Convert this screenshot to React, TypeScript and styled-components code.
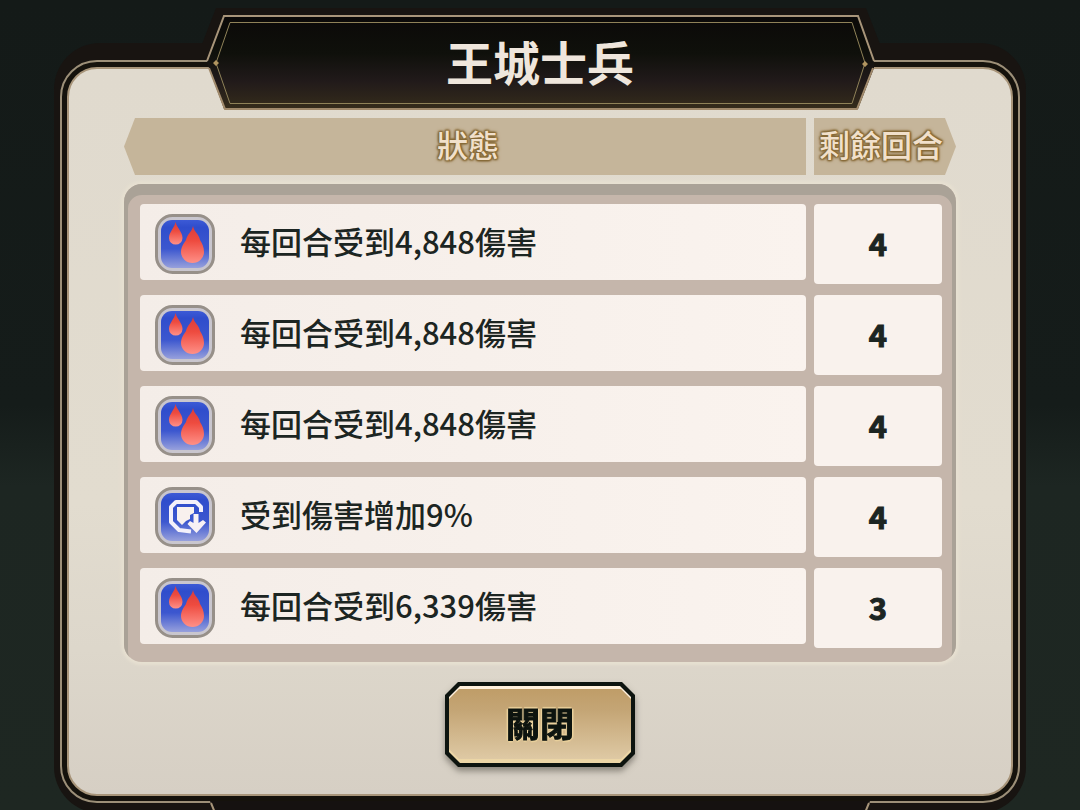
import React from 'react';
import styled, { createGlobalStyle } from 'styled-components';

const GlobalStyle = createGlobalStyle`
  * { box-sizing: border-box; }
  html, body { margin: 0; background: #171d1b; }
  body { font-family: "Noto Sans CJK TC", "Noto Sans", sans-serif; }
`;

const Page = styled.div`
  height: 100vh;
  overflow: hidden;
  padding: 43px 5% 0;
  background: linear-gradient(180deg, #141a18 0%, #151c1a 50%, #1d2622 60%, #1e2722 100%);
`;

const Dialog = styled.main`
  position: relative;
  padding: 17px 6px 10px;
  border-radius: 46px;
  background: #181411;
`;

const OuterLine = styled.div`
  border: 2px solid #9c8f78;
  border-radius: 37px;
  padding: 5px;
  background: #15120c;
`;

const Body = styled.div`
  border: 2px solid #a8957a;
  border-radius: 30px;
  padding: 49px 55px 27px;
  display: flex;
  flex-direction: column;
  align-items: center;
  gap: 20px;
  background: linear-gradient(180deg, #e0dace 0%, #e2dccf 60%, #ddd7cb 80%, #d6cfc4 100%);
`;

const Banner = styled.header`
  position: absolute;
  top: -35px;
  left: 50%;
  width: 684px;
  height: 104px;
  transform: translateX(-50%);
  display: flex;
  align-items: center;
  justify-content: center;
  padding-top: 2px;
`;

const BannerArt = styled.svg`
  position: absolute;
  inset: 0;
`;

const Title = styled.h1`
  position: relative;
  margin: 0;
  font-size: 47px;
  line-height: 64px;
  font-weight: 700;
  color: #efe6dc;
`;

const BottomTab = styled.svg`
  position: absolute;
  left: 50%;
  bottom: -32px;
  transform: translateX(-50%);
`;

const StatusTable = styled.table`
  display: block;
  width: 100%;
`;

const HeadGroup = styled.thead`
  display: block;
  margin-bottom: 9px;
`;

const HeadRow = styled.tr`
  display: grid;
  grid-template-columns: 1fr 142px;
  gap: 8px;
`;

const HeadCell = styled.th<{ $end?: boolean }>`
  height: 57px;
  padding: ${p => (p.$end ? '0 8px 6px 0' : '0 0 6px 6px')};
  display: flex;
  align-items: center;
  justify-content: center;
  white-space: nowrap;
  font-size: 31px;
  line-height: 44px;
  font-weight: 500;
  color: #f1e0cb;
  background: #c5b59a;
  text-shadow: 0 0 2px #876a38, 0 0 2px #876a38, 1px 1px 2px #876a38, -1px -1px 2px #876a38,
    1px -1px 2px #876a38, -1px 1px 2px #876a38, 0 0 4px #8f7342;
  clip-path: ${p =>
    p.$end
      ? 'polygon(0 0, calc(100% - 11px) 0, 100% 50%, calc(100% - 11px) 100%, 0 100%)'
      : 'polygon(11px 0, 100% 0, 100% 100%, 11px 100%, 0 50%)'};
`;

const Panel = styled.tbody`
  display: flex;
  flex-direction: column;
  gap: 11px;
  padding: 20px 14px 14px 16px;
  border-radius: 18px;
  background: #c5b6ab;
  box-shadow: inset 0 7px 0 4px #aaa297, 0 0 3px 3px #e7e0d1;
`;

const Row = styled.tr`
  display: grid;
  grid-template-columns: 1fr 128px;
  align-items: start;
  gap: 8px;
`;

const EffectCell = styled.td`
  height: 76px;
  padding: 3px 15px 0;
  display: flex;
  align-items: center;
  gap: 25px;
  border-radius: 4px;
  font-size: 31px;
  line-height: 44px;
  font-weight: 500;
  color: #1c2522;
  background: linear-gradient(90deg, #f4ede8, #faf3ee);
`;

const EffectText = styled.span`
  padding-bottom: 6px;
`;

const TurnsCell = styled.td`
  height: 80px;
  padding: 0 0 2px;
  display: flex;
  align-items: center;
  justify-content: center;
  border-radius: 4px;
  font-size: 31px;
  line-height: 44px;
  font-weight: 700;
  color: #1c2522;
  -webkit-text-stroke: 1px #1c2522;
  background: #f9f2ed;
`;

const Badge = styled.svg`
  flex: none;
`;

const ButtonShadow = styled.div`
  filter: drop-shadow(0 4px 3px rgba(60, 55, 48, 0.5));
`;

const cut = (n: number) =>
  `polygon(${n}px 0, calc(100% - ${n}px) 0, 100% ${n}px, 100% calc(100% - ${n}px), calc(100% - ${n}px) 100%, ${n}px 100%, 0 calc(100% - ${n}px), 0 ${n}px)`;

const CloseButton = styled.button`
  position: relative;
  display: block;
  width: 190px;
  height: 85px;
  padding: 0 0 4px;
  border: 0;
  cursor: pointer;
  background: #0d140f;
  clip-path: ${cut(13)};

  &::before {
    content: '';
    position: absolute;
    inset: 4px;
    background: linear-gradient(180deg, #fff0dc 0 50%, #ecd6a6 50% 100%);
    clip-path: ${cut(11)};
  }

  &::after {
    content: '';
    position: absolute;
    inset: 7px 4px 8px;
    background: linear-gradient(180deg, #bf9d68 0%, #c4a575 30%, #dec9a4 100%);
    clip-path: ${cut(10)};
  }
`;

const ButtonLabel = styled.span`
  position: relative;
  z-index: 1;
  font-family: "Noto Sans CJK TC", sans-serif;
  font-size: 34px;
  line-height: 48px;
  font-weight: 700;
  color: #0d140f;
  -webkit-text-stroke: 1px #0d140f;
  text-shadow: 0 0 2px #f0d9a4, 2px 0 1px #ead19c, -2px 0 1px #ead19c, 0 2px 1px #ead19c, 0 -2px 1px #ead19c;
`;

type Kind = 'bleed' | 'vulnerable';

const effects: { kind: Kind; text: string; turns: number }[] = [
  { kind: 'bleed', text: '每回合受到4,848傷害', turns: 4 },
  { kind: 'bleed', text: '每回合受到4,848傷害', turns: 4 },
  { kind: 'bleed', text: '每回合受到4,848傷害', turns: 4 },
  { kind: 'vulnerable', text: '受到傷害增加9%', turns: 4 },
  { kind: 'bleed', text: '每回合受到6,339傷害', turns: 3 },
];

function EffectIcon({ kind, id }: { kind: Kind; id: string }) {
  return (
    <Badge width="60" height="60" viewBox="0 0 60 60" aria-hidden="true">
      <defs>
        <linearGradient id={`${id}-bg`} x1="0" y1="0" x2="0" y2="1">
          <stop offset="0" stopColor="#3c5ad6" />
          <stop offset="0.15" stopColor="#2f4dcc" />
          <stop offset="0.6" stopColor="#3c57cf" />
          <stop offset="1" stopColor="#97a0dc" />
        </linearGradient>
        <linearGradient id={`${id}-drop`} x1="0" y1="0" x2="0" y2="1">
          <stop offset="0" stopColor="#d93c3c" />
          <stop offset="0.4" stopColor="#ee4b3f" />
          <stop offset="1" stopColor="#ff9087" />
        </linearGradient>
      </defs>
      <rect x="1.5" y="1.5" width="57" height="57" rx="16" fill="#c9c6ce" stroke="#979089" strokeWidth="3" />
      <rect x="6" y="6" width="48" height="48" rx="11" fill={`url(#${id}-bg)`} />
      {kind === 'bleed' ? (
        <g>
          <path fill={`url(#${id}-drop)`} d="M20.5 8 C22 14 27.5 18 27.5 24 A6.7 6.5 0 0 1 14 24 C14 18 19.500 14 20.500 8Z" />
          <path fill={`url(#${id}-drop)`} d="M38 12 C39 18 44 20 45 26 C47 29 49 33 49 38 A11.5 11 0 0 1 26 38 C26 33 29 29 31 26 C32 20 37 18 38 12Z" />
        </g>
      ) : (
        <g>
          <path
            d="M46 25 V20 L41 15 H21 L16 20 V35 L24 43 L36 44.5"
            fill="none"
            stroke="#f3f0fa"
            strokeWidth="4"
            strokeLinejoin="round"
          />
          <path d="M22 20 H39 V26 L35 28 V32 L31 34 L27 38 L22 33Z" fill="#f8f1ee" />
          <path d="M38.500 27 H43.500 V36 L48 33 L51 35.500 L41.500 46 L32.500 37 L35 34 L38.500 36Z" fill="#f8f1f4" />
        </g>
      )}
    </Badge>
  );
}

export default function App() {
  return (
    <>
      <GlobalStyle />
      <Page>
        <Dialog>
          <OuterLine>
            <Body>
              <StatusTable>
                <HeadGroup>
                  <HeadRow>
                    <HeadCell scope="col">狀態</HeadCell>
                    <HeadCell scope="col" $end>剩餘回合</HeadCell>
                  </HeadRow>
                </HeadGroup>
                <Panel>
                  {effects.map((effect, i) => (
                    <Row key={i}>
                      <EffectCell>
                        <EffectIcon kind={effect.kind} id={`effect${i}`} />
                        <EffectText>{effect.text}</EffectText>
                      </EffectCell>
                      <TurnsCell>{effect.turns}</TurnsCell>
                    </Row>
                  ))}
                </Panel>
              </StatusTable>
              <ButtonShadow>
                <CloseButton type="button">
                  <ButtonLabel>關閉</ButtonLabel>
                </CloseButton>
              </ButtonShadow>
            </Body>
          </OuterLine>
          <Banner>
            <BannerArt width="684" height="104" viewBox="0 0 684 104" aria-hidden="true">
              <defs>
                <linearGradient id="banner" x1="0" y1="0" x2="0" y2="1">
                  <stop offset="0" stopColor="#0b0908" />
                  <stop offset="0.4" stopColor="#0f100b" />
                  <stop offset="0.7" stopColor="#211a1a" />
                  <stop offset="1" stopColor="#352c1b" />
                </linearGradient>
              </defs>
              <path d="M4 36 L18 0 H668 L682 36 V52 H4Z" fill="#181411" />
              <path d="M9 54 L26 8 H660 L676 54 V60 L660 101 H26 L11 60Z" fill="url(#banner)" />
              <path d="M9 53 L26 8 H660 L676 53" fill="none" stroke="#a8957a" strokeWidth="2" />
              <path d="M11 60 L27 101 H659 L675 60" fill="none" stroke="#a18a6c" strokeWidth="2" />
              <path d="M18 55 L32 14.5 H654 L667 55 L654 95.5 H32Z" fill="none" stroke="#8f8258" />
              <path d="M18 52 L21 55 L18 58 L15 55Z M667 53 L670 56 L667 59 L664 56Z" fill="#b19560" />
            </BannerArt>
            <Title>王城士兵</Title>
          </Banner>
          <BottomTab width="660" height="44" viewBox="0 0 660 44" aria-hidden="true">
            <path d="M0 0 L14 36 H646 L660 0Z" fill="#151110" />
            <path d="M1 2 L15 36 H645 L659 2" fill="none" stroke="#a8957a" strokeWidth="2" />
          </BottomTab>
        </Dialog>
      </Page>
    </>
  );
}
